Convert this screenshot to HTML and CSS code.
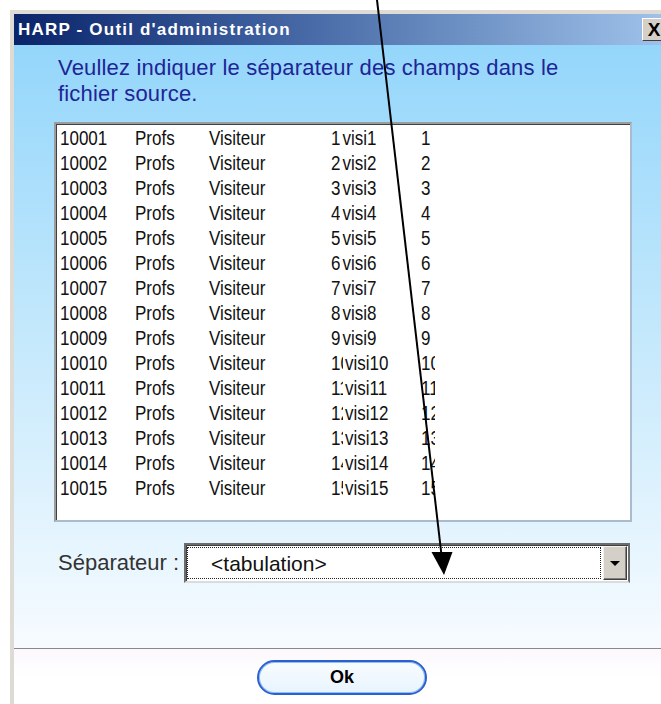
FILE: index.html
```html
<!DOCTYPE html>
<html lang="fr">
<head>
<meta charset="utf-8">
<title>HARP - Outil d'administration</title>
<link rel="stylesheet" href="styles.css">
</head>
<body>
<div class="window">
  <div class="titlebar">
    <span class="title">HARP - Outil d'administration</span>
    <span class="close">X</span>
  </div>
  <div class="content">
    <p class="prompt">Veullez indiquer le séparateur des champs dans le<br>fichier source.</p>
    <div class="listbox">
      <div class="row"><span>10001</span><span>Profs</span><span>Visiteur</span><span class="pair"><span class="num">1</span>visi1</span><span class="num">1</span></div>
      <div class="row"><span>10002</span><span>Profs</span><span>Visiteur</span><span class="pair"><span class="num">2</span>visi2</span><span class="num">2</span></div>
      <div class="row"><span>10003</span><span>Profs</span><span>Visiteur</span><span class="pair"><span class="num">3</span>visi3</span><span class="num">3</span></div>
      <div class="row"><span>10004</span><span>Profs</span><span>Visiteur</span><span class="pair"><span class="num">4</span>visi4</span><span class="num">4</span></div>
      <div class="row"><span>10005</span><span>Profs</span><span>Visiteur</span><span class="pair"><span class="num">5</span>visi5</span><span class="num">5</span></div>
      <div class="row"><span>10006</span><span>Profs</span><span>Visiteur</span><span class="pair"><span class="num">6</span>visi6</span><span class="num">6</span></div>
      <div class="row"><span>10007</span><span>Profs</span><span>Visiteur</span><span class="pair"><span class="num">7</span>visi7</span><span class="num">7</span></div>
      <div class="row"><span>10008</span><span>Profs</span><span>Visiteur</span><span class="pair"><span class="num">8</span>visi8</span><span class="num">8</span></div>
      <div class="row"><span>10009</span><span>Profs</span><span>Visiteur</span><span class="pair"><span class="num">9</span>visi9</span><span class="num">9</span></div>
      <div class="row"><span>10010</span><span>Profs</span><span>Visiteur</span><span class="pair"><span class="num">10</span>visi10</span><span class="num">10</span></div>
      <div class="row"><span>10011</span><span>Profs</span><span>Visiteur</span><span class="pair"><span class="num">11</span>visi11</span><span class="num">11</span></div>
      <div class="row"><span>10012</span><span>Profs</span><span>Visiteur</span><span class="pair"><span class="num">12</span>visi12</span><span class="num">12</span></div>
      <div class="row"><span>10013</span><span>Profs</span><span>Visiteur</span><span class="pair"><span class="num">13</span>visi13</span><span class="num">13</span></div>
      <div class="row"><span>10014</span><span>Profs</span><span>Visiteur</span><span class="pair"><span class="num">14</span>visi14</span><span class="num">14</span></div>
      <div class="row"><span>10015</span><span>Profs</span><span>Visiteur</span><span class="pair"><span class="num">15</span>visi15</span><span class="num">15</span></div>
    </div>
    <div class="sep-row">
      <span class="sep-label">Séparateur :</span>
      <div class="combo">
        <div class="combo-field">&lt;tabulation&gt;</div>
        <div class="combo-btn"><span class="caret"></span></div>
      </div>
    </div>
  </div>
  <div class="footer">
    <button class="ok" type="button">Ok</button>
  </div>
</div>
<svg class="pointer" width="661" height="704" viewBox="0 0 661 704">
  <line x1="377" y1="0" x2="441.5" y2="555" stroke="#000" stroke-width="2"/>
  <polygon points="431.5,552 452.5,552 444,575" fill="#000"/>
</svg>
</body>
</html>
```
FILE: styles.css
```css
html, body {
  margin: 0;
  padding: 0;
}

body {
  width: 661px;
  height: 704px;
  overflow: hidden;
  position: relative;
  background: #fff;
  font-family: "Liberation Sans", Arial, sans-serif;
}

/* dialog frame */
.window {
  margin: 10px 0 0 10px;
  width: 680px;
  border-top: 4px solid #dedbd5;
  border-left: 4px solid #dedbd5;
  box-shadow: inset 1px 1px 0 #f4f3f0;
}

.titlebar {
  height: 31px;
  display: flex;
  align-items: center;
  padding: 0 28px 0 4px;
  background: linear-gradient(90deg, #0a246a 0%, #3a5c9c 35%, #a6caf0 100%);
}

.title {
  color: #fff;
  font-weight: bold;
  font-size: 17px;
  letter-spacing: 1.2px;
}

.close {
  margin-left: auto;
  width: 22px;
  height: 21px;
  box-sizing: content-box;
  background: #d4d0c8;
  border: 1px solid;
  border-color: #fff #404040 #404040 #fff;
  font-weight: bold;
  font-size: 19px;
  line-height: 21px;
  text-align: center;
  color: #000;
}

.content {
  height: 603px;
  box-sizing: border-box;
  padding-top: 10px;
  background: linear-gradient(180deg, #94d6fb 0%, #c6e9fc 50%, #f7fbff 100%);
}

.prompt {
  margin: 0 0 15px 44px;
  font-size: 22px;
  letter-spacing: 0.18px;
  line-height: 26px;
  color: #1e2596;
}

/* file preview list */
.listbox {
  margin-left: 40px;
  width: 578px;
  height: 400px;
  box-sizing: border-box;
  background: #fff;
  border: 2px solid;
  border-color: #9c9c9c #a9bccd #a9bccd #9c9c9c;
  box-shadow: inset 1px 1px 0 #404040;
  padding: 2px 0 0 4px;
  overflow: hidden;
}

/* narrow, tall system font: 17px glyphs stretched vertically */
.row {
  display: grid;
  grid-template-columns: 75px 74px 122px 90px 1fr;
  height: 25px;
  line-height: 25px;
  font-size: 17px;
  color: #111;
  white-space: nowrap;
  transform: scaleY(1.22);
}

.pair {
  display: flex;
}

.num {
  display: inline-block;
  max-width: 14px;
  overflow: hidden;
}

.pair .num {
  max-width: 12px;
  margin-right: 2px;
}

/* separator selector */
.sep-row {
  margin-top: 21px;
  padding-left: 44px;
  display: flex;
  align-items: center;
  gap: 5px;
}

.sep-label {
  font-size: 22px;
  color: #333;
}

.combo {
  width: 446px;
  height: 40px;
  box-sizing: border-box;
  display: flex;
  padding: 1px;
  background: #fff;
  border: 2px solid;
  border-color: #6c6c6c #6c6c6c #dcdcdc #6c6c6c;
  box-shadow: inset 1px 1px 0 #404040;
}

.combo-field {
  flex: 1;
  margin: 1px 2px 1px 0;
  border: 1px dotted #222;
  padding-left: 23px;
  font-size: 21px;
  line-height: 31px;
  color: #111;
}

.combo-btn {
  width: 22px;
  box-sizing: content-box;
  background: #d4d0c8;
  border: 1px solid;
  border-color: #f2f1ee #404040 #404040 #f2f1ee;
  box-shadow: inset -1px -1px 0 #808080;
  display: flex;
  align-items: center;
  justify-content: center;
}

.caret {
  width: 0;
  height: 0;
  border-left: 5px solid transparent;
  border-right: 5px solid transparent;
  border-top: 5px solid #000;
}

.footer {
  height: 60px;
  border-top: 1px solid #8a8a8a;
  background: linear-gradient(180deg, #fcf8fd 0%, #fff 40%);
  padding: 11px 0 0 243px;
}

.ok {
  width: 170px;
  height: 35px;
  border: 2px solid #2c5fcf;
  border-radius: 18px;
  background-color: #c4e6fc;
  background-image:
    radial-gradient(circle, rgba(255, 255, 255, 0.75) 0.7px, transparent 0.9px),
    linear-gradient(180deg, #e6f5fe 0%, #c2e4fb 60%, #a8d6f8 100%);
  background-size: 2px 2px, 100% 100%;
  box-shadow: inset 0 0 0 1px #8fc0f0;
  font-family: "Liberation Sans", Arial, sans-serif;
  font-weight: bold;
  font-size: 18px;
  color: #000;
  padding: 0;
}

/* annotation pointer drawn over the dialog */
.pointer {
  position: absolute;
  top: 0;
  left: 0;
  pointer-events: none;
}
```
